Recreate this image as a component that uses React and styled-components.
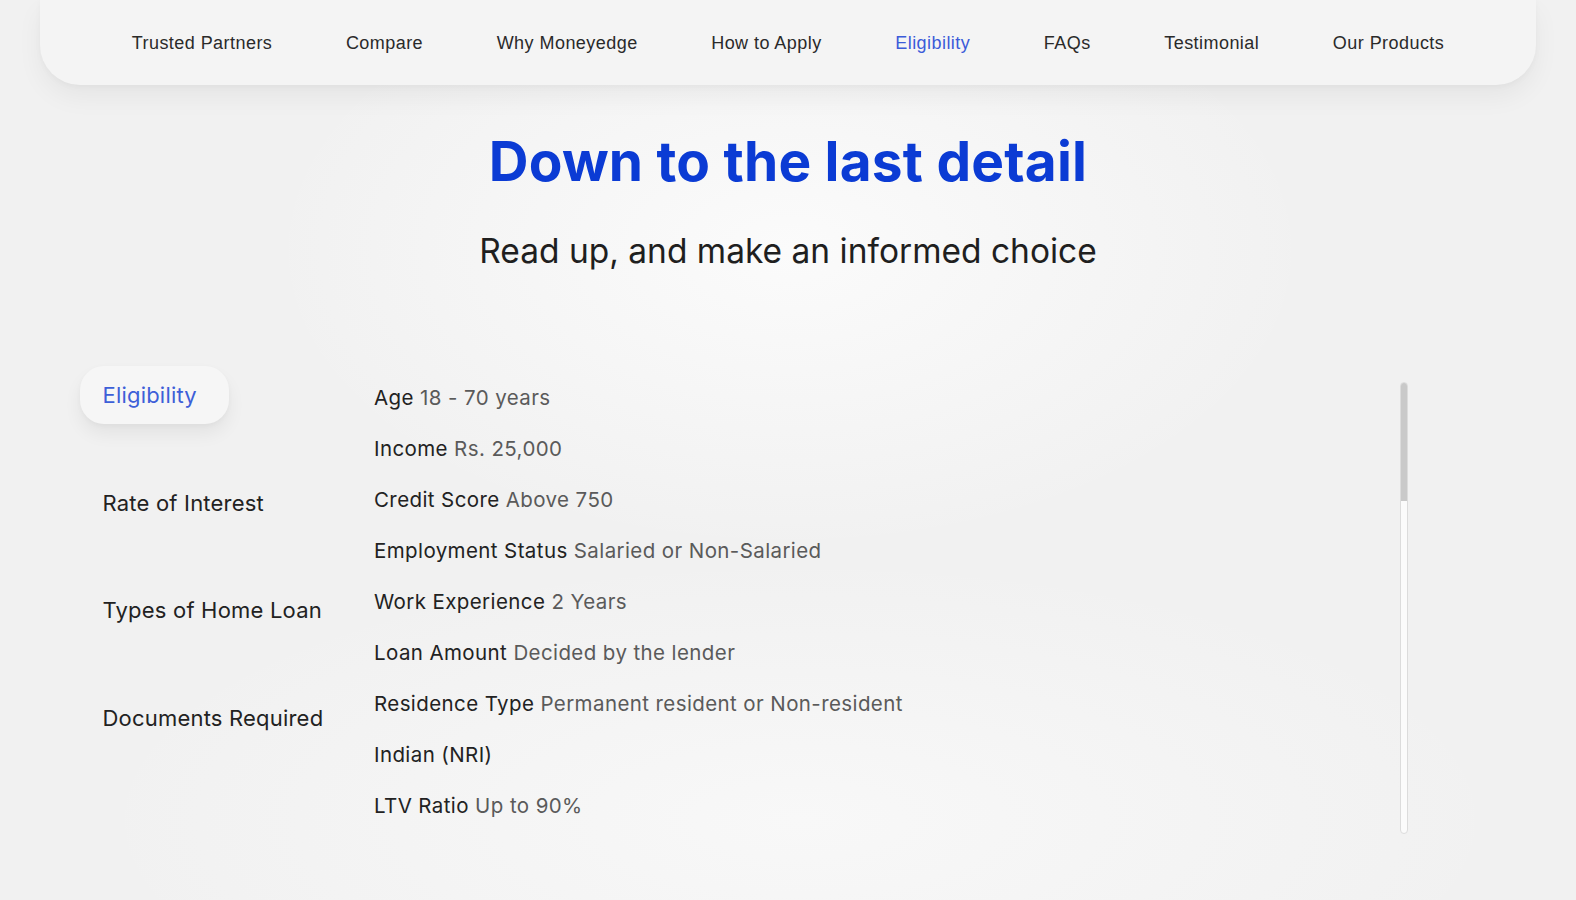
import React from "react";
import styled, { createGlobalStyle } from "styled-components";

const Global = createGlobalStyle`
  html, body { margin: 0; padding: 0; }
  body {
    background: #f1f1f1;
    font-family: Inter, "Liberation Sans", sans-serif;
    color: #222;
    -webkit-font-smoothing: antialiased;
  }
`;

const Page = styled.div`
  width: 1576px;
  height: 900px;
  overflow: hidden;
  background:
    radial-gradient(ellipse 520px 300px at 790px 250px, #fbfbfb 0%, rgba(251,251,251,0) 100%),
    radial-gradient(ellipse 700px 260px at 800px 820px, #f8f8f8 0%, rgba(248,248,248,0) 100%),
    #f1f1f1;
`;

const Nav = styled.nav`
  margin: 0 40px;
  height: 85px;
  background: #f4f4f4;
  border-radius: 0 0 40px 40px;
  box-shadow: 0 12px 26px rgba(0, 0, 0, 0.05), 0 2px 6px rgba(0, 0, 0, 0.03);
  display: flex;
  align-items: center;
  justify-content: center;
  gap: 73.6px;
  box-sizing: border-box;
`;

const NavLink = styled.a`
  font-family: "Liberation Sans", Arial, sans-serif;
  font-size: 18px;
  color: ${(p) => (p.$active ? "#3b5bd9" : "#2a2a2a")};
  text-decoration: none;
  letter-spacing: 0.45px;
  line-height: 1;
`;

const Hero = styled.header`
  display: flex;
  flex-direction: column;
  align-items: center;
  margin-top: 46px;
`;

const Title = styled.h1`
  margin: 0;
  font-family: Inter, sans-serif;
  font-weight: 700;
  font-size: 55px;
  line-height: 60px;
  color: #0b3bd4;
  letter-spacing: 0.2px;
`;

const Subtitle = styled.p`
  margin: 40px 0 0;
  font-family: Inter, sans-serif;
  font-size: 33.5px;
  line-height: 40px;
  color: #1f1f1f;
  font-weight: 400;
`;

const Body = styled.section`
  display: flex;
  align-items: flex-start;
  margin-top: 97px;
  padding-left: 80px;
`;

const Tabs = styled.div`
  width: 294px;
  flex-shrink: 0;
  display: flex;
  flex-direction: column;
  align-items: flex-start;
  gap: 49.5px;
`;

const Tab = styled.div`
  height: 58px;
  display: flex;
  align-items: center;
  padding: 0 32px 0 22.5px;
  border-radius: 24px;
  font-family: Inter, sans-serif;
  font-size: 22px;
  letter-spacing: 0.2px;
  color: ${(p) => (p.$active ? "#3d5fd8" : "#222")};
  background: ${(p) => (p.$active ? "#f6f6f6" : "transparent")};
  box-shadow: ${(p) =>
    p.$active ? "0 10px 18px rgba(0,0,0,0.06), 0 2px 5px rgba(0,0,0,0.03)" : "none"};
  transform: translateY(-2px);
`;

const Details = styled.ul`
  list-style: none;
  margin: 0;
  padding: 3.5px 0 0;
  flex: 1;
`;

const Row = styled.li`
  height: 51px;
  display: flex;
  align-items: center;
  font-family: Inter, sans-serif;
  font-size: 20.5px;
  letter-spacing: 0.4px;
  white-space: pre;
`;

const Label = styled.span`
  color: #222;
`;

const Value = styled.span`
  color: #5a5a5a;
`;

const ScrollTrack = styled.div`
  width: 8px;
  height: 452px;
  margin: 14px 168px 0 0;
  border: 1px solid #dcdcdc;
  border-radius: 5px;
  background: #fbfbfb;
  box-sizing: border-box;
  display: flex;
  flex-direction: column;
`;

const ScrollThumb = styled.div`
  height: 118px;
  background: #c9c9c9;
  border-radius: 4px 4px 0 0;
`;

const navItems = [
  "Trusted Partners",
  "Compare",
  "Why Moneyedge",
  "How to Apply",
  "Eligibility",
  "FAQs",
  "Testimonial",
  "Our Products",
];

const tabs = ["Eligibility", "Rate of Interest", "Types of Home Loan", "Documents Required"];

const details = [
  ["Age", "18 - 70 years"],
  ["Income", "Rs. 25,000"],
  ["Credit Score", "Above 750"],
  ["Employment Status", "Salaried or Non-Salaried"],
  ["Work Experience", "2 Years"],
  ["Loan Amount", "Decided by the lender"],
  ["Residence Type", "Permanent resident or Non-resident"],
  ["Indian (NRI)", ""],
  ["LTV Ratio", "Up to 90%"],
];

export default function App() {
  return (
    <Page>
      <Global />
      <Nav>
        {navItems.map((n) => (
          <NavLink key={n} href="#" $active={n === "Eligibility"}>
            {n}
          </NavLink>
        ))}
      </Nav>
      <Hero>
        <Title>Down to the last detail</Title>
        <Subtitle>Read up, and make an informed choice</Subtitle>
      </Hero>
      <Body>
        <Tabs>
          {tabs.map((t, i) => (
            <Tab key={t} $active={i === 0}>
              {t}
            </Tab>
          ))}
        </Tabs>
        <Details>
          {details.map(([l, v]) => (
            <Row key={l}>
              <Label>{l}</Label>
              {v && <Value> {v}</Value>}
            </Row>
          ))}
        </Details>
        <ScrollTrack>
          <ScrollThumb />
        </ScrollTrack>
      </Body>
    </Page>
  );
}
